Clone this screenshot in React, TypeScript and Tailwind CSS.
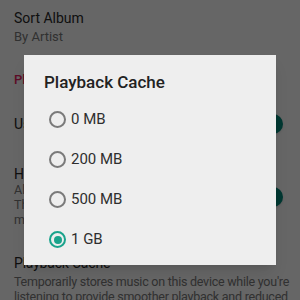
import React from "react";

function Toggle() {
  return (
    <div className="relative w-[36px] h-[20px] flex items-center">
      <div className="w-[34px] h-[14px] rounded-full bg-[#80cbc4]" />
      <div className="absolute right-0 top-0 w-[20px] h-[20px] rounded-full bg-[#00897b] shadow" />
    </div>
  );
}

function Radio({ label, checked }: { label: string; checked?: boolean }) {
  return (
    <div className="flex items-center h-[40px]">
      <div
        className={
          checked
            ? "w-[17px] h-[17px] rounded-full border-2 border-[#1aa38c] flex items-center justify-center"
            : "w-[17px] h-[17px] rounded-full border-2 border-[#7a7a7a]"
        }
      >
        {checked && <div className="w-[8px] h-[8px] rounded-full bg-[#1aa38c]" />}
      </div>
      <span className="ml-[5px] text-[15px] text-[#2e2e2e]">{label}</span>
    </div>
  );
}

export default function App() {
  return (
    <div
      className="relative w-[300px] h-[300px] overflow-hidden bg-white"
      style={{ fontFamily: "Roboto, 'Liberation Sans', sans-serif" }}
    >
      <div className="pl-[14px] pr-[17px]">
        <div className="pt-[9px]">
          <div className="text-[14px] leading-[18px] text-[#2a2a2a]">Sort Album</div>
          <div className="text-[13px] leading-[16px] text-[#7a7a7a] mt-[2px]">By Artist</div>
        </div>
        <div className="mt-[25px] text-[13px] leading-[19px] font-medium text-[#e91e63]">Playback</div>
        <div className="mt-[24px] flex items-center justify-between h-[22px]">
          <span className="text-[14px] text-[#2a2a2a]">Use Wi-Fi only</span>
          <Toggle />
        </div>
        <div className="mt-[31px] flex items-center justify-between">
          <div className="w-[230px]">
            <div className="text-[14px] leading-[16px] text-[#2a2a2a]">High quality on mobile</div>
            <div className="text-[12.5px] leading-[15px] text-[#7a7a7a] whitespace-nowrap">
              <div>Always stream at highest quality.</div>
              <div>This may use more data on</div>
              <div>mobile networks.</div>
            </div>
          </div>
          <Toggle />
        </div>
        <div className="mt-[28px] w-[284px]">
          <div className="text-[14px] leading-[17px] tracking-[-0.2px] text-[#2a2a2a]">Playback Cache</div>
          <div className="text-[12.5px] leading-[15px] tracking-[-0.25px] text-[#7a7a7a] mt-[2px]">
            Temporarily stores music on this device while you're listening to provide smoother playback and reduced
            data usage.
          </div>
        </div>
      </div>

      <div className="absolute inset-0 bg-black/60" />

      <div className="absolute left-[24px] top-[55px] w-[252px] h-[210px] bg-[#eeeeee] shadow-lg">
        <div className="pl-[20px] pt-[15px] text-[17px] font-medium text-[#222]">Playback Cache</div>
        <div className="pl-[25px] mt-[4px]">
          <Radio label="0 MB" />
          <Radio label="200 MB" />
          <Radio label="500 MB" />
          <Radio label="1 GB" checked />
        </div>
      </div>
    </div>
  );
}
